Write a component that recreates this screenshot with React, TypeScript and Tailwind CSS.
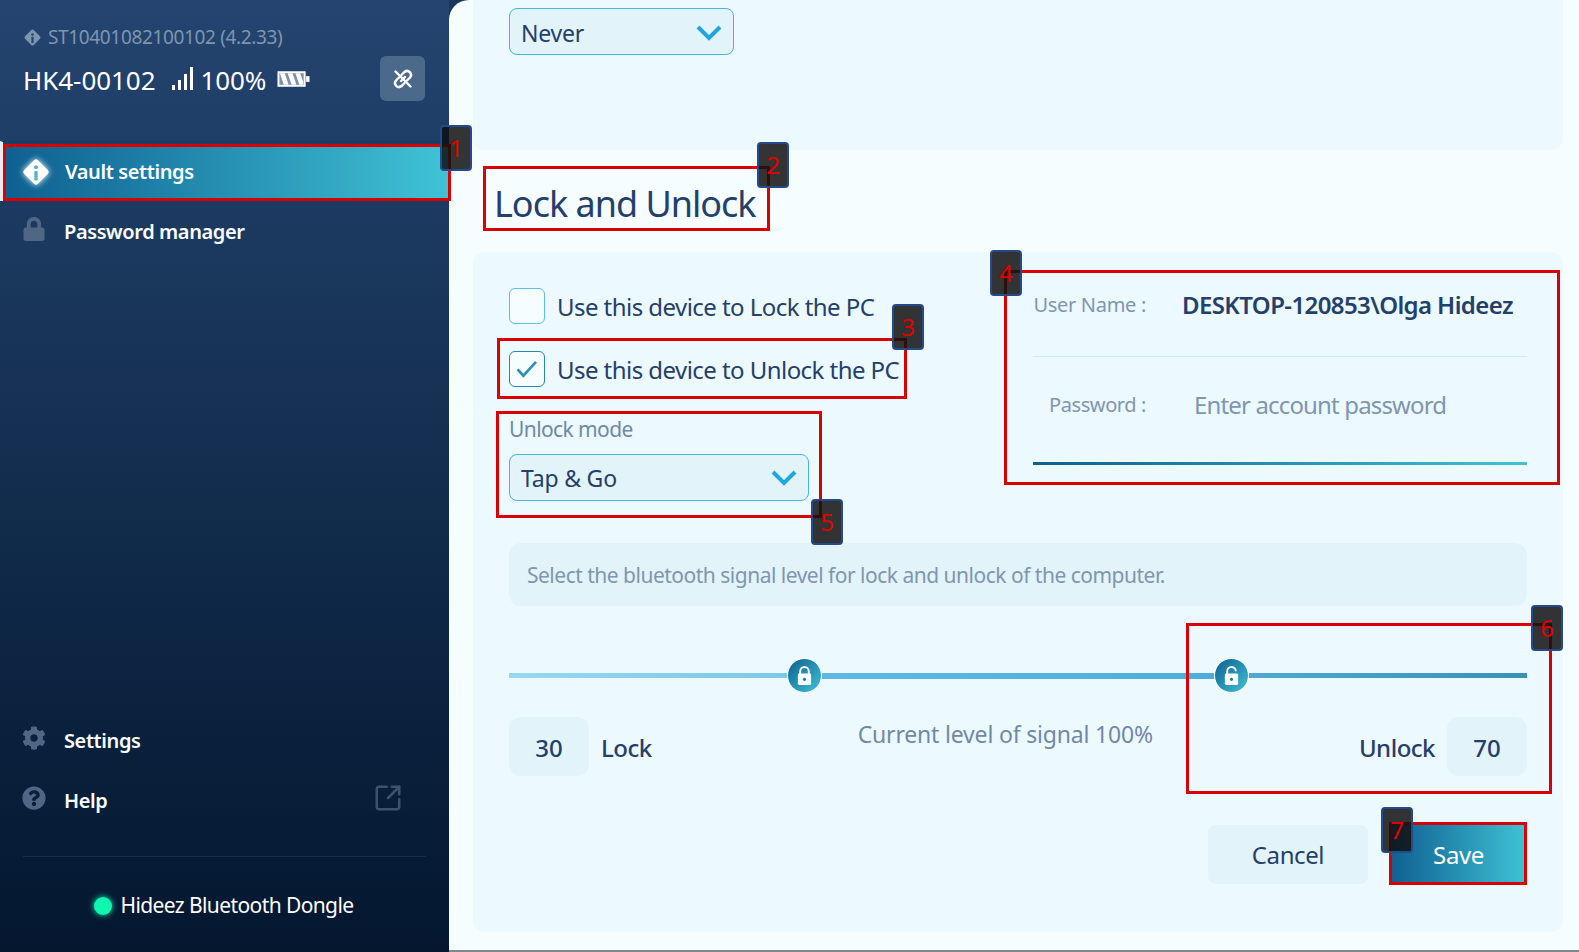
import { FaCog, FaLock, FaQuestionCircle } from "react-icons/fa";
import { SquareArrowOutUpRight } from "lucide-react";
import type { ReactNode } from "react";

const font = "font-['Noto_Sans','Liberation_Sans',sans-serif]";

// Hideez diamond logo with the "i" knocked out
function Diamond({ className, color, cut }: { className: string; color: string; cut: string }) {
  return (
    <svg viewBox="0 0 28 28" className={className}>
      <rect x="5" y="5" width="18" height="18" rx="2.5" fill={color} transform="rotate(45 14 14)" />
      <circle cx="14" cy="9.5" r="1.9" fill={cut} />
      <rect x="12.4" y="13" width="3.2" height="9" rx="0.8" fill={cut} />
    </svg>
  );
}

function Signal() {
  return (
    <svg viewBox="0 0 22 24" className="h-6 w-[22px]" fill="white">
      <rect x="0" y="18" width="3" height="5" />
      <rect x="6" y="13" width="3" height="10" />
      <rect x="12" y="7" width="3" height="16" />
      <rect x="18" y="0" width="3" height="23" />
    </svg>
  );
}

function Battery() {
  return (
    <svg viewBox="0 0 34 18" className="h-[18px] w-[33px]">
      <rect x="0.500" y="1" width="29" height="16" fill="white" />
      <rect x="2.500" y="3" width="25" height="12" fill="#7f91a8" />
      <path d="M3 3h5l4 12H7zM11 3h5l4 12h-5zM19 3h5l3 9v3h-4z" fill="white" />
      <rect x="30" y="6" width="3.500" height="6" fill="white" />
    </svg>
  );
}

function Chevron() {
  return (
    <svg viewBox="0 0 26 18" className="h-[18px] w-[26px]" fill="none" stroke="#1fa7dd" strokeWidth="4">
      <path d="M2 3l11 11L24 3" />
    </svg>
  );
}

function PadLock({ open }: { open?: boolean }) {
  return (
    <svg viewBox="0 0 20 22" className="h-[21px] w-[19px]">
      <path d={open ? "M5.500 10V6.500a4.500 4.500 0 0 1 9 0" : "M5.500 10V6.500a4.500 4.500 0 0 1 9 0V10"} fill="none" stroke="white" strokeWidth="2" />
      <rect x="3" y="9" width="14" height="12" rx="1.500" fill="white" />
      <circle cx="10" cy="15" r="1.700" fill="#1f7ea6" />
    </svg>
  );
}

function NavItem({ icon, label, trailing }: { icon: ReactNode; label: string; trailing?: ReactNode }) {
  return (
    <div className="flex h-[60px] items-center pl-[22px] pr-[46px] pt-[2px]">
      <span className="mb-[6px] flex w-[42px] text-[#4f6685]">{icon}</span>
      <span className="text-[20px] font-semibold tracking-[-0.4px] text-white">{label}</span>
      {trailing && <span className="mb-[6px] ml-auto text-[#3c526e]">{trailing}</span>}
    </div>
  );
}

function Thumb({ children }: { children: ReactNode }) {
  return (
    <div className="relative z-10 flex h-[35px] w-[35px] shrink-0 items-center justify-center rounded-full border border-white bg-gradient-to-br from-[#0f6090] to-[#40c3d6]">
      {children}
    </div>
  );
}

function Select({ value, className }: { value: string; className: string }) {
  return (
    <div className={`flex h-[47px] items-center justify-between rounded-lg border border-[#45b5e5] bg-[#e2f3fa] pl-[11px] pr-[11px] ${className}`}>
      <span className="pt-[3px] text-[23px] tracking-[-0.2px] text-[#24406a]">{value}</span>
      <span className="pt-[2px]"><Chevron /></span>
    </div>
  );
}

function Checkbox({ checked, label }: { checked?: boolean; label: string }) {
  return (
    <div className="flex h-[36px] items-center gap-3">
      <div className={`flex h-[36px] w-[36px] items-center justify-center rounded-md border bg-[#f5fdff] ${checked ? "border-[#2a86ae]" : "border-[#5bbfe6]"}`}>
        {checked && (
          <svg viewBox="0 0 24 20" className="h-[18px] w-[22px]" fill="none" stroke="#2a8fb3" strokeWidth="3">
            <path d="M1.500 10.500l6.500 7L22 2" />
          </svg>
        )}
      </div>
      <span className="whitespace-nowrap pt-[2px] text-[24px] tracking-[-0.55px] text-[#24406a]">{label}</span>
    </div>
  );
}

// numbered red frames that sit on top of the screenshot
const marks = [
  { n: "1", box: "left-[3px] top-[144px] w-[448px] h-[57px]", tag: "left-[440px] top-[125px]" },
  { n: "2", box: "left-[483px] top-[166px] w-[287px] h-[65px]", tag: "left-[757px] top-[142px]" },
  { n: "3", box: "left-[497px] top-[338px] w-[410px] h-[61px]", tag: "left-[892px] top-[304px]" },
  { n: "4", box: "left-[1004px] top-[270px] w-[556px] h-[215px]", tag: "left-[990px] top-[250px]" },
  { n: "5", box: "left-[496px] top-[411px] w-[326px] h-[107px]", tag: "left-[811px] top-[499px]" },
  { n: "6", box: "left-[1186px] top-[623px] w-[366px] h-[171px]", tag: "left-[1531px] top-[605px]" },
  { n: "7", box: "left-[1389px] top-[822px] w-[138px] h-[63px]", tag: "left-[1381px] top-[807px]" },
];

export default function App() {
  return (
    <div className={`relative flex h-[952px] w-[1579px] overflow-hidden bg-[#1b3658] ${font}`}>
      <aside className="flex w-[449px] shrink-0 flex-col bg-gradient-to-b from-[#244570] to-[#04172f]">
        <div className="h-[141px] px-[23px] pt-[23px]">
          <div className="flex h-[28px] items-center gap-[6px] text-[19px] tracking-[-0.35px] text-[#7f95ae]">
            <Diamond className="h-[19px] w-[19px]" color="#7f95ae" cut="#244570" />
            ST10401082100102 (4.2.33)
          </div>
          <div className="mt-[5px] flex items-center text-white">
            <span className="pt-[3px] text-[26px] tracking-[-0.05px]">HK4-00102</span>
            <span className="ml-4 mr-[7px]"><Signal /></span>
            <span className="pt-[3px] text-[26px] tracking-[-0.1px]">100%</span>
            <span className="ml-[11px]"><Battery /></span>
            <button className="ml-auto mr-[1px] flex h-[45px] w-[45px] items-center justify-center rounded-md bg-[#4b6a8b]">
              <svg viewBox="0 0 24 24" className="h-6 w-6" fill="none" stroke="white" strokeWidth="2.400" strokeLinecap="round">
                <path d="M10.500 8l3-3a3.900 3.900 0 0 1 5.500 5.500l-3 3M13.500 16l-3 3A3.900 3.900 0 0 1 5 13.500l3-3M10 14l4-4" />
                <path d="M4.500 4.500l15 15" />
              </svg>
            </button>
          </div>
        </div>
        <div className="h-[60px] border-l-[3px] border-t border-l-white/90 border-t-[#123f5e] pt-[3px]">
          <div className="ml-[2px] flex h-[53px] items-center bg-gradient-to-r from-[#0f6090] to-[#40c3d6] pl-[16px]">
            <Diamond className="mr-[14px] h-[30px] w-[30px] drop-shadow-[0_0_3px_white]" color="white" cut="#5bb4c8" />
            <span className="text-[20px] font-semibold tracking-[-0.4px] text-white">Vault settings</span>
          </div>
        </div>
        <div>
          <NavItem icon={<FaLock size={24} />} label="Password manager" />
        </div>
        <div className="mt-auto">
          <NavItem icon={<FaCog size={24} />} label="Settings" />
          <NavItem
            icon={<FaQuestionCircle size={24} />}
            label="Help"
            trailing={<SquareArrowOutUpRight size={30} strokeWidth={2} />}
          />
          <div className="mx-[23px] mt-[26px] border-t border-[#1a2e48]" />
          <div className="flex h-[95px] items-center justify-center pt-[2px] pr-[2px]">
            <span className="mr-[9px] h-[18px] w-[18px] rounded-full bg-[#10f5b0] shadow-[0_0_6px_#10f5b0]" />
            <span className="text-[21px] tracking-[-0.6px] text-white">Hideez Bluetooth Dongle</span>
          </div>
        </div>
      </aside>

      <main className="flex flex-1 flex-col rounded-tl-[20px] border-b-2 border-[#80888f] bg-[#f5fdff] pl-[24px] pr-[16px]">
        <section className="h-[150px] rounded-b-xl bg-[#ecf9fe] pl-[36px] pt-[8px]">
          <Select value="Never" className="w-[225px]" />
        </section>

        <h2 className="flex h-[102px] items-center pl-[21px] pt-[6px] text-[36px] tracking-[-1px] text-[#24406a]">
          Lock and Unlock
        </h2>

        <section className="flex h-[680px] flex-col rounded-xl bg-[#ecf9fe] px-[36px] pt-[36px]">
          <div className="flex h-[255px]">
            <div className="w-[524px]">
              <Checkbox label="Use this device to Lock the PC" />
              <div className="mt-[27px]"><Checkbox checked label="Use this device to Unlock the PC" /></div>
              <div className="mt-[27px] text-[21px] tracking-[-0.6px] text-[#7189a6]">Unlock mode</div>
              <Select value="Tap & Go" className="mt-[8px] w-[300px]" />
            </div>
            <div className="-mt-[16px] flex-1">
              <div className="flex h-[85px] items-center border-b border-[#cfeaf6] pb-[18px]">
                <span className="w-[113px] text-right text-[20px] tracking-[-0.3px] text-[#7f96b0]">User Name :</span>
                <span className="ml-[36px] whitespace-nowrap text-[24px] font-semibold tracking-[-0.6px] text-[#24406a]">DESKTOP-120853\Olga Hideez</span>
              </div>
              <div className="flex h-[105px] items-center pb-[9px]">
                <span className="w-[113px] text-right text-[20px] tracking-[-0.4px] text-[#7f96b0]">Password :</span>
                <span className="ml-[48px] text-[24px] tracking-[-0.85px] text-[#7f96b0]">Enter account password</span>
              </div>
              <div className="h-[3px] bg-gradient-to-r from-[#0f6090] to-[#40c3d6]" />
            </div>
          </div>

          <div className="flex h-[63px] items-center rounded-xl bg-[#e2f3fa] pl-[18px] pt-[2px] text-[21px] tracking-[-0.5px] text-[#7f96b0]">
            Select the bluetooth signal level for lock and unlock of the computer.
          </div>

          <div className="mt-[52px] flex h-[35px] items-center">
            <div className="h-[5px] w-[278px] bg-gradient-to-r from-[#97d8ef] to-[#7cc8e8]" />
            <Thumb><PadLock /></Thumb>
            <div className="h-[6px] w-[392px] bg-gradient-to-r from-[#5ebae0] to-[#4eadd8]" />
            <Thumb><PadLock open /></Thumb>
            <div className="h-[5px] flex-1 bg-gradient-to-r from-[#50a9d0] to-[#3b90b8]" />
          </div>

          <div className="mt-[24px] flex h-[59px] items-start text-[24px] font-medium text-[#24406a]">
            <div className="flex h-[59px] w-[80px] items-center justify-center rounded-xl bg-[#e2f3fa] pt-[3px]">30</div>
            <span className="ml-[12px] flex h-[59px] items-center pt-[2px] tracking-[-0.5px]">Lock</span>
            <span className="ml-[206px] text-[23px] font-normal tracking-[-0.18px] text-[#7189a6]">Current level of signal 100%</span>
            <span className="ml-auto flex h-[59px] items-center pt-[2px] tracking-[-0.5px]">Unlock</span>
            <div className="ml-[12px] flex h-[59px] w-[80px] items-center justify-center rounded-xl bg-[#e2f3fa] pt-[3px]">70</div>
          </div>

          <div className="mt-[49px] flex justify-end gap-[22px] text-[24px]">
            <button className="h-[59px] w-[160px] rounded-lg bg-[#e2f3fa] tracking-[-0.4px] text-[#24406a]">Cancel</button>
            <button className="h-[59px] w-[137px] bg-gradient-to-r from-[#0f6090] to-[#40c3d6] tracking-[-0.4px] text-white">Save</button>
          </div>
        </section>
      </main>

      {marks.map((m) => (
        <div key={m.n}>
          <div className={`absolute border-[3px] border-[#d90000] ${m.box}`} />
          <div className={`absolute flex h-[46px] w-[32px] items-center justify-center rounded border-2 border-[#254a8c] bg-[#111]/85 text-[24px] text-[#e00000] ${m.tag}`}>
            {m.n}
          </div>
        </div>
      ))}
    </div>
  );
}
